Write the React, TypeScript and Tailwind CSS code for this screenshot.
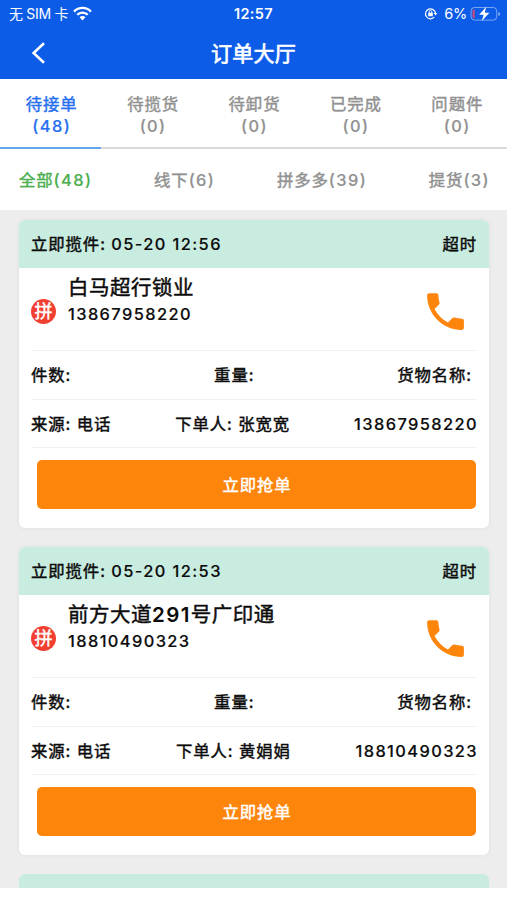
import React from "react";

type Order = { time: string; name: string; phone: string; customer: string };

const orders: Order[] = [
  { time: "05-20 12:56", name: "白马超行锁业", phone: "13867958220", customer: "张宽宽" },
  { time: "05-20 12:53", name: "前方大道291号广印通", phone: "18810490323", customer: "黄娟娟" },
];

const tabs = [
  { label: "待接单", count: 48 },
  { label: "待揽货", count: 0 },
  { label: "待卸货", count: 0 },
  { label: "已完成", count: 0 },
  { label: "问题件", count: 0 },
];

const filters = [
  { label: "全部", count: 48, tone: "text-[#4caf50]" },
  { label: "线下", count: 6, tone: "text-[#919191]" },
  { label: "拼多多", count: 39, tone: "text-[#919191]" },
  { label: "提货", count: 3, tone: "text-[#919191]" },
];

/* Latin digits are set a step heavier and wider than the Chinese text. */
function Num({ children }: { children: React.ReactNode }) {
  return <span className="font-medium tracking-[1.4px] [-webkit-text-stroke:0.15px]">{children}</span>;
}

function WifiIcon() {
  return (
    <svg className="ml-[5px] h-[15px] w-[19px]" viewBox="0 0 18 14" fill="none" stroke="white" strokeWidth="2.2">
      <path d="M1 5.2C5.4.6 12.6.6 17 5.2" />
      <path d="M4 8.2c2.8-2.8 7.2-2.8 10 0" />
      <path d="M6.2 10.5c1.6-1.5 4-1.5 5.6 0L9 13.6z" fill="white" stroke="none" />
    </svg>
  );
}

function RotationLockIcon() {
  return (
    <svg className="h-[13px] w-[14px]" viewBox="0 0 14 13" fill="none" stroke="white">
      <path d="M10.2 10.2A5 5 0 1 1 11.5 6.5" strokeWidth="1.2" />
      <path d="M9.7 6h3.6l-1.8 2.5z" fill="white" stroke="none" />
      <rect x="4.2" y="5.8" width="4.6" height="3.5" rx=".5" fill="white" stroke="none" />
      <path d="M5.2 6V4.8a1.3 1.3 0 0 1 2.6 0V6" strokeWidth=".9" />
    </svg>
  );
}

function BatteryIcon() {
  return (
    <svg className="ml-[3px] h-[16px] w-[31px]" viewBox="0 0 31 16" fill="none">
      <rect x="1.1" y="1.5" width="25.6" height="12.6" rx="3.4" stroke="white" strokeOpacity=".45" />
      <path d="M28.3 6v4c1.2-.4 1.8-1.1 1.8-2s-.6-1.6-1.8-2z" fill="white" fillOpacity=".5" />
      <path d="M4.6 3.4v8.8H4c-.8 0-1.4-.6-1.4-1.4V4.8c0-.8.6-1.4 1.4-1.4z" fill="#d8486f" />
      <path d="M16.2.8 9.2 8.8h4.4L11.8 15l7.6-8.2h-4.6z" fill="white" />
    </svg>
  );
}

function OrderCard({ order }: { order: Order }) {
  return (
    <section className="h-[307.5px] shrink-0 overflow-hidden rounded-[6px] bg-white shadow-[0_0_5px_rgba(0,0,0,0.06)]">
      <div className="flex h-[48px] items-center justify-between bg-[#c9ece0] pt-px pr-[12px] pl-[12px]">
        <span>
          立即揽件: <Num>{order.time}</Num>
        </span>
        <span>超时</span>
      </div>
      <div className="mx-[12px]">
        <div className="flex h-[83px] items-center border-b border-[#f1f1f1]">
          <div className="mt-[4px] flex h-[25px] w-[25px] items-center justify-center rounded-full bg-[#f13f32] pt-px text-[18px] leading-[24px] tracking-normal text-white">
            拼
          </div>
          <div className="ml-[12px] h-full grow pt-[6px]">
            <div className="text-[20.5px] leading-[27px] tracking-[0.5px]">
              {order.name.split(/(\d+)/).map((part, i) =>
                i % 2 === 1 ? (
                  <span key={i} className="font-semibold tracking-[1.4px] [-webkit-text-stroke:0]">
                    {part}
                  </span>
                ) : (
                  part
                )
              )}
            </div>
            <div className="leading-[26px]">
              <Num>{order.phone}</Num>
            </div>
          </div>
          <svg className="mt-[4px] mr-[7px] h-[49px] w-[49px]" viewBox="0 0 24 24" fill="#fd850b">
            <path d="M6.62 10.79c1.44 2.83 3.76 5.14 6.59 6.59l2.2-2.2c.27-.27.67-.36 1.02-.24 1.12.37 2.33.57 3.57.57.55 0 1 .45 1 1V20c0 .55-.45 1-1 1-9.39 0-17-7.61-17-17 0-.55.45-1 1-1h3.5c.55 0 1 .45 1 1 0 1.25.2 2.45.57 3.57.11.35.03.74-.25 1.02l-2.2 2.2z" />
          </svg>
        </div>
        <div className="flex h-[49px] items-center justify-between border-b border-[#f1f1f1] pt-px pr-[5px]">
          <span>件数:</span>
          <span>重量:</span>
          <span>货物名称:</span>
        </div>
        <div className="flex h-[48px] items-center justify-between border-b border-[#f1f1f1] pt-px">
          <span>来源: 电话</span>
          <span>下单人: {order.customer}</span>
          <span className="-mr-px">
            <Num>{order.phone}</Num>
          </span>
        </div>
        <button className="mt-[12px] ml-[6px] flex h-[49px] w-[439px] items-center justify-center rounded-[5px] bg-[#fd850b] pt-px pl-px text-white">
          立即抢单
        </button>
      </div>
    </section>
  );
}

export default function App() {
  return (
    <div className="flex h-[900px] w-[507px] flex-col overflow-hidden bg-white font-['Inter','Noto_Sans_CJK_SC',sans-serif] text-[16.4px] font-normal tracking-[0.9px] whitespace-nowrap text-[#0c0c0c] [-webkit-text-stroke:0.45px]">
      <header className="h-[79px] shrink-0 bg-[#0c5ce8] text-white">
        <div className="grid h-[27px] grid-cols-3 items-center text-[14.5px] tracking-normal [-webkit-text-stroke:0]">
          <div className="flex items-center pl-[9px]">
            <span className="text-[14px] tracking-[-0.3px]">无 SIM 卡</span>
            <WifiIcon />
          </div>
          <span className="pt-px text-center font-semibold tracking-[0.3px]">12:57</span>
          <div className="flex items-center justify-end pr-[6px]">
            <RotationLockIcon />
            <span className="ml-[6px] tracking-[-0.3px]">6%</span>
            <BatteryIcon />
          </div>
        </div>
        <div className="grid h-[52px] grid-cols-3 items-center">
          <svg className="ml-[31px] h-[22px] w-[14px]" viewBox="0 0 14 22" fill="none" stroke="white" strokeWidth="2.6">
            <path d="M13 1.2 2.6 11 13 20.8" />
          </svg>
          <h1 className="pt-px text-center text-[21px] tracking-[0.2px] [-webkit-text-stroke:0.7px]">订单大厅</h1>
        </div>
      </header>
      <nav className="grid h-[70px] shrink-0 grid-cols-5 text-center leading-[22px] text-[#919191]">
        {tabs.map((tab, i) => (
          <div
            key={tab.label}
            className={i === 0 ? "border-b-2 border-[#65a5ec] pt-[14px] pl-[2px] text-[#2670ef]" : "border-b-2 border-[#dadada] pt-[14px] pl-[2px]"}
          >
            <div>{tab.label}</div>
            <div>
              <Num>({tab.count})</Num>
            </div>
          </div>
        ))}
      </nav>
      <div className="flex h-[61px] shrink-0 items-center justify-between pt-px pr-[17px] pl-[19px]">
        {filters.map((f) => (
          <div key={f.label} className={f.tone}>
            {f.label}
            <Num>({f.count})</Num>
          </div>
        ))}
      </div>
      <main className="flex h-[678px] shrink-0 flex-col gap-[19.5px] overflow-hidden bg-[#ededed] pt-[10px] pr-[18px] pl-[19px]">
        {orders.map((order) => (
          <OrderCard key={order.time} order={order} />
        ))}
        <section className="h-[14px] shrink-0 rounded-t-[6px] bg-[#c9ece0]" />
      </main>
    </div>
  );
}
